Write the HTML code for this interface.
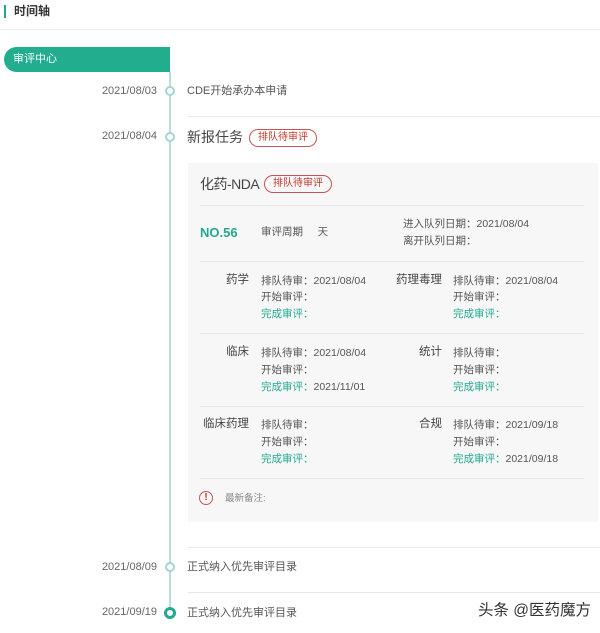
<!DOCTYPE html><html><head><meta charset="utf-8"><style>
*{margin:0;padding:0;box-sizing:border-box}
body{width:600px;height:633px;background:#fff;position:relative;overflow:hidden;font-family:"Liberation Sans","Noto Sans CJK SC",sans-serif;color:#555}
.a{position:absolute;white-space:nowrap;line-height:1}
.d{font-size:11px;color:#666;width:80px;text-align:right;left:77px}
.hl{position:absolute;height:1px;background:#e8e8e8}
.c{position:absolute;left:165px;width:10px;height:10px;border:2px solid #a8d3d3;border-radius:50%;background:#fff}
.s{font-size:10.5px;color:#555}
.g{color:#22a98f}
.badge{position:absolute;border:1.5px solid #c65454;border-radius:10px;color:#c0392b;font-size:10px;line-height:1;padding:3px 8px}
.lab{font-size:11.5px;color:#444;text-align:right;width:60px}
</style></head><body>
<div class="a" style="left:4px;top:5px;width:2px;height:13px;background:#22a98f"></div>
<div class="a" style="left:14px;top:5px;font-size:12px;font-weight:bold;color:#333">时间轴</div>
<div class="hl" style="left:0;top:29px;width:600px;background:#f0f0f0"></div>
<div class="a" style="left:4px;top:47px;width:166px;height:25px;background:#22ad8f;border-radius:13px 0 0 13px"></div>
<div class="a" style="left:13px;top:54px;font-size:11px;color:#fff">审评中心</div>
<div class="a" style="left:169px;top:72px;width:2px;height:540px;background:#b9dcdc"></div>
<div class="a d" style="top:86px">2021/08/03</div><div class="c" style="top:86px"></div>
<div class="a" style="left:187px;top:86px;font-size:11px;color:#555">CDE开始承办本申请</div>
<div class="hl" style="left:188px;top:116px;width:412px"></div>
<div class="a d" style="top:131px">2021/08/04</div><div class="c" style="top:132px"></div>
<div class="a" style="left:187px;top:130px;font-size:14px;color:#444">新报任务</div>
<div class="badge" style="left:249px;top:129px">排队待审评</div>
<div class="a" style="left:188px;top:163px;width:410px;height:359px;background:#f7f7f8"></div>
<div class="a" style="left:200px;top:177px;font-size:14px;color:#444;letter-spacing:-0.5px">化药-NDA</div>
<div class="badge" style="left:264px;top:175px">排队待审评</div>
<div class="hl" style="left:200px;top:205px;width:384px"></div>
<div class="a" style="left:200px;top:226px;font-size:13px;font-weight:bold;color:#22a98f">NO.56</div>
<div class="a s" style="left:261px;top:227px">审评周期&nbsp;&nbsp;&nbsp;&nbsp;&nbsp;天</div>
<div class="a s" style="left:403px;top:219px">进入队列日期：2021/08/04</div>
<div class="a s" style="left:403px;top:236px">离开队列日期：</div>
<div class="hl" style="left:200px;top:261px;width:384px"></div>

<div class="a lab" style="left:189px;top:275px">药学</div>
<div class="a s" style="left:261px;top:276px">排队待审：2021/08/04</div>
<div class="a s" style="left:261px;top:292px">开始审评：</div>
<div class="a s g" style="left:261px;top:309px">完成审评：</div>
<div class="a lab" style="left:382px;top:275px">药理毒理</div>
<div class="a s" style="left:453px;top:276px">排队待审：2021/08/04</div>
<div class="a s" style="left:453px;top:292px">开始审评：</div>
<div class="a s g" style="left:453px;top:309px">完成审评：</div>
<div class="hl" style="left:200px;top:333px;width:384px"></div>

<div class="a lab" style="left:189px;top:347px">临床</div>
<div class="a s" style="left:261px;top:348px">排队待审：2021/08/04</div>
<div class="a s" style="left:261px;top:365px">开始审评：</div>
<div class="a s" style="left:261px;top:382px"><span class="g">完成审评：</span>2021/11/01</div>
<div class="a lab" style="left:382px;top:347px">统计</div>
<div class="a s" style="left:453px;top:348px">排队待审：</div>
<div class="a s" style="left:453px;top:365px">开始审评：</div>
<div class="a s g" style="left:453px;top:382px">完成审评：</div>
<div class="hl" style="left:200px;top:406px;width:384px"></div>

<div class="a lab" style="left:189px;top:419px">临床药理</div>
<div class="a s" style="left:261px;top:420px">排队待审：</div>
<div class="a s" style="left:261px;top:437px">开始审评：</div>
<div class="a s g" style="left:261px;top:454px">完成审评：</div>
<div class="a lab" style="left:382px;top:419px">合规</div>
<div class="a s" style="left:453px;top:420px">排队待审：2021/09/18</div>
<div class="a s" style="left:453px;top:437px">开始审评：</div>
<div class="a s" style="left:453px;top:454px"><span class="g">完成审评：</span>2021/09/18</div>
<div class="hl" style="left:200px;top:478px;width:384px"></div>
<div class="a" style="left:199px;top:491px;width:14px;height:14px;border:1.5px solid #c65454;border-radius:50%;color:#c0392b;font-size:10px;font-weight:bold;text-align:center;line-height:11px">!</div>
<div class="a" style="left:225px;top:494px;font-size:9.5px;color:#888">最新备注:</div>

<div class="hl" style="left:188px;top:547px;width:412px"></div>
<div class="a d" style="top:562px">2021/08/09</div><div class="c" style="top:562px"></div>
<div class="a" style="left:187px;top:562px;font-size:11px;color:#555">正式纳入优先审评目录</div>
<div class="hl" style="left:188px;top:592px;width:412px"></div>
<div class="a d" style="top:607px">2021/09/19</div>
<div class="a" style="left:164px;top:607px;width:12px;height:12px;border:3px solid #22a98f;border-radius:50%;background:#fff"></div>
<div class="a" style="left:187px;top:608px;font-size:11px;color:#555">正式纳入优先审评目录</div>
<div class="a" style="left:478px;top:603px;font-size:15.5px;color:#333">头条 @医药魔方</div>
</body></html>
